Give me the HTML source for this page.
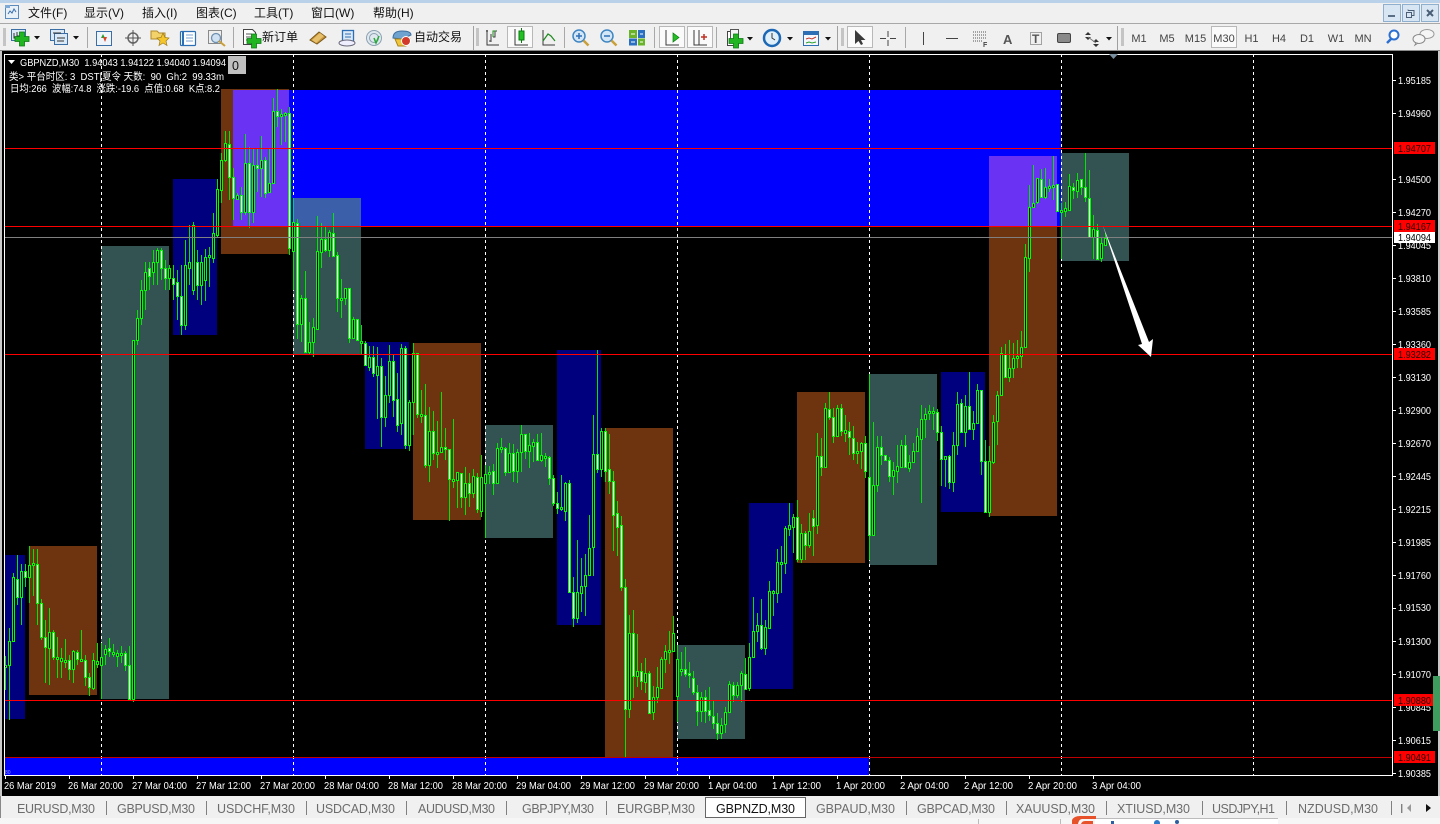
<!DOCTYPE html>
<html><head><meta charset="utf-8"><title>GBPNZD,M30</title>
<style>
html,body{margin:0;padding:0;background:#f0f0f0;width:1440px;height:824px;overflow:hidden}
svg{display:block}
text{font-family:"Liberation Sans","Noto Sans CJK SC",sans-serif;white-space:pre}
.m{font-size:12px;fill:#111}
.tb{font-size:12px;fill:#111}
.tf{font-size:11px;fill:#444}
.p{font-size:10.5px;fill:#fff}
.pd{font-size:10.5px;fill:#200}
.t{font-size:10.5px;fill:#fff}
.i{font-size:10px;fill:#fff}
.tab{font-size:12.5px;fill:#6c6c6c}
.c{shape-rendering:crispEdges}
</style></head><body>
<svg id="s" xmlns="http://www.w3.org/2000/svg" width="1440" height="824" viewBox="0 0 1440 824">
<defs>
<g id="plus"><path d="M-2.5-7h5v4.500h4.500v5h-4.500v4.500h-5v-4.500h-4.500v-5h4.500z" fill="#22b522" stroke="#0a7a12" stroke-width=".8"/></g>
<g id="arr"><path d="M0 0h6l-3 3.500z" fill="#111"/></g>
</defs>
<rect width="1440" height="824" fill="#f0f0f0"/>
<rect width="1440" height="3" fill="#b9d2ea"/>
<!-- menu -->
<g fill="none" stroke="#5b8bbd"><rect x="5.500" y="5.500" width="13" height="13" fill="#e8f0f8"/></g>
<path d="M8 14l2-3 2 2 2-4 2 3" fill="none" stroke="#3a6fae"/>
<path d="M5 5h5v3h-5z" fill="#7fa9d6"/>
<g class="m"><text x="28" y="17" class="m">文件(F)</text><text x="84" y="17" class="m">显示(V)</text><text x="142" y="17" class="m">插入(I)</text><text x="196" y="17" class="m">图表(C)</text><text x="254" y="17" class="m">工具(T)</text><text x="311" y="17" class="m">窗口(W)</text><text x="373" y="17" class="m">帮助(H)</text></g>
<g fill="#d8e6f4" stroke="#8fafce"><rect x="1383.500" y="4.500" width="17" height="17"/><rect x="1402.500" y="4.500" width="17" height="17"/><rect x="1421.500" y="4.500" width="17" height="17"/></g>
<rect x="1388" y="15" width="7" height="2" fill="#5a6f85"/>
<path d="M1408 10.500h6v5h-2M1408 10.500v-1M1406.500 12.500h5v5h-5z" fill="none" stroke="#4a5f75"/>
<path d="M1427 10l6 6M1433 10l-6 6" stroke="#4a5f75" stroke-width="2"/>
<!-- toolbar -->
<rect y="23" width="1440" height="1" fill="#a8a8a8"/>
<rect y="50" width="1440" height="1" fill="#8a8a8a"/>
<g fill="#b0b0b0" class="c"><rect x="3" y="28" width="3" height="18" opacity=".7"/><rect x="473" y="26" width="1" height="24" fill="#a0a0a0"/><rect x="476" y="28" width="3" height="18" opacity=".7"/><rect x="837" y="26" width="1" height="24" fill="#a0a0a0"/><rect x="841" y="28" width="3" height="18" opacity=".7"/><rect x="1117" y="26" width="1" height="24" fill="#a0a0a0"/><rect x="1121" y="28" width="3" height="18" opacity=".7"/></g>
<g fill="#a8a8a8" class="c"><rect x="87" y="27" width="1" height="21"/><rect x="233" y="27" width="1" height="21"/><rect x="564" y="27" width="1" height="21"/><rect x="654" y="27" width="1" height="21"/><rect x="716" y="27" width="1" height="21"/><rect x="905" y="27" width="1" height="21"/></g>
<!-- new chart -->
<rect x="11.500" y="29.500" width="14" height="11" fill="#dbe8f5" stroke="#3b6ea5"/><path d="M14 33v5h7M17 32v4h5" stroke="#333" fill="none"/>
<use href="#plus" x="22" y="39"/><use href="#arr" x="34" y="36"/>
<rect x="50.500" y="29.500" width="14" height="11" fill="#dbe8f5" stroke="#3b6ea5"/><rect x="54.500" y="33.500" width="13" height="11" fill="#dbe8f5" stroke="#3b6ea5"/><path d="M53 33h8M57 38h8M57 41h7" stroke="#333"/>
<use href="#arr" x="73" y="36"/>
<!-- market watch -->
<rect x="96.500" y="31.500" width="15" height="14" fill="#eef4fa" stroke="#3b6ea5"/><path d="M101 38l2-4 2 4z" fill="#2a9a2a"/><path d="M103 37l2 5 2-5z" fill="#d8452a"/>
<circle cx="133" cy="38" r="5" fill="none" stroke="#666" stroke-width="1.500"/><path d="M133 30v16M125 38h16" stroke="#555"/>
<path d="M151 31h6l2 2h6v6h-14z" fill="#f3d26a" stroke="#b08a2a"/><path d="M163 33l2 4.500 4 .5-3 3 1 4.500-4-2.500-4 2.500 1-4.500-3-3 4-.5z" fill="#f5c62c" stroke="#a07c18" stroke-width=".7"/>
<rect x="180.500" y="31.500" width="15" height="14" rx="1" fill="#fff" stroke="#2c6fb5" stroke-width="1.200"/><path d="M183 31v14" stroke="#2c6fb5" stroke-width="2"/><path d="M186 35h7M186 38h7M186 41h7" stroke="#7aa3cf"/>
<rect x="208.500" y="30.500" width="13" height="13" fill="#eee" stroke="#8a8a8a"/><circle cx="216" cy="38" r="4.500" fill="#cfe1f2" stroke="#6f8fb0" stroke-width="1.300"/><path d="M219 41l6 5" stroke="#c9a03a" stroke-width="2"/>
<!-- new order -->
<path d="M243.500 29.500h9l3 3v12h-12z" fill="#fff" stroke="#444"/><path d="M246 34h6M246 37h6M246 40h4" stroke="#555"/><use href="#plus" x="254" y="41"/>
<text x="262" y="41" class="tb">新订单</text>
<path d="M310 40l9-8 7 5-9 7z" fill="#c9973f" stroke="#7c5a1a"/><path d="M312 40l8-7 4 3-8 7z" fill="#e6c06a"/>
<rect x="342.500" y="30.500" width="11" height="11" fill="#dbe8f5" stroke="#2c6fb5" stroke-width="1.300"/><path d="M345 34h6M345 37h6" stroke="#2c6fb5"/><ellipse cx="347" cy="43" rx="8" ry="3" fill="#eef" stroke="#667"/>
<circle cx="374" cy="38" r="7.500" fill="#dfe8ee" stroke="#8aa0b0"/><circle cx="374" cy="38" r="4.500" fill="none" stroke="#8aa0b0"/><path d="M374 38l2 5 3-7" fill="none" stroke="#2aa83a" stroke-width="1.500"/>
<path d="M393 38q0-7 9-7t9 4l-9 4z" fill="#6fa3cf" stroke="#3d6f9f"/><path d="M395 39h15l-4 7h-8z" fill="#f2c63a" stroke="#a8851e"/><circle cx="406" cy="41" r="4.500" fill="#d23a2a" stroke="#fff"/>
<text x="414" y="41" class="tb">自动交易</text>
<!-- chart types -->
<path d="M487 30v15h12M486 31h2M491 34v8M491 41h-2M495 31v6h-2M495 31h2" fill="none" stroke="#3a3a3a"/><path d="M493 37v-6h3" stroke="#1e8a1e" fill="none"/>
<rect x="507.500" y="26.500" width="25" height="21" fill="#fafafa" stroke="#b8b8b8"/>
<path d="M515 29v16h13" stroke="#3a3a3a" fill="none"/><rect x="519" y="31" width="5" height="9" fill="#22c022" stroke="#0a7a12"/><path d="M521.500 28v3M521.500 40v3" stroke="#0a7a12"/>
<path d="M543 30v15h12" stroke="#3a3a3a" fill="none"/><path d="M543 41l5-7 3 2 4 5" fill="none" stroke="#1e8a1e" stroke-width="1.200"/>
<circle cx="579" cy="36" r="6" fill="#d3e6f6" stroke="#3f86c2" stroke-width="1.500"/><path d="M576 36h6M579 33v6" stroke="#2c6fb5" stroke-width="1.500"/><path d="M583.500 40.500l5 5" stroke="#c9a03a" stroke-width="2.500"/>
<circle cx="607" cy="36" r="6" fill="#d3e6f6" stroke="#3f86c2" stroke-width="1.500"/><path d="M604 36h6" stroke="#2c6fb5" stroke-width="1.500"/><path d="M611.500 40.500l5 5" stroke="#c9a03a" stroke-width="2.500"/>
<rect x="629" y="30" width="8" height="8" fill="#6ab42c"/><rect x="638" y="30" width="7" height="8" fill="#2a6fc2"/><rect x="629" y="38.500" width="8" height="7" fill="#2a6fc2"/><rect x="638" y="38.500" width="7" height="7" fill="#6ab42c"/><path d="M631 34h4M640 34h3M631 42h4M640 42h3" stroke="#fff"/>
<rect x="659.500" y="26.500" width="25" height="21" fill="#fafafa" stroke="#b8b8b8"/><path d="M666 30v15h13" stroke="#3a3a3a" fill="none"/><path d="M673 33v9l6-4.500z" fill="#22c022" stroke="#0a7a12" stroke-width=".7"/>
<rect x="687.500" y="26.500" width="25" height="21" fill="#fafafa" stroke="#b8b8b8"/><path d="M694 30v15h13M699 30v15" stroke="#3a3a3a" fill="none"/><path d="M701 37h6M704 34v6" stroke="#c03020" stroke-width="1.500"/>
<path d="M727.500 31.500h8l3 3v11h-11z" fill="#fff" stroke="#444"/><rect x="730.500" y="29.500" width="8" height="10" fill="#f4f4f4" stroke="#555"/><use href="#plus" x="736" y="41"/><use href="#arr" x="747" y="37"/>
<circle cx="772" cy="38" r="8" fill="#dff0fb" stroke="#1c68b5" stroke-width="2.500"/><path d="M772 33v5l3 2" stroke="#333" fill="none"/><use href="#arr" x="787" y="37"/>
<rect x="803.500" y="31.500" width="15" height="14" fill="#f4f8fc" stroke="#2c6fb5"/><rect x="804" y="32" width="14" height="3" fill="#2c6fb5"/><path d="M806 39l3-1 3 1 4-2" stroke="#c0392b" fill="none"/><path d="M806 43l3-1 3 1 4-1" stroke="#2aa02a" fill="none"/><use href="#arr" x="825" y="37"/>
<rect x="847.500" y="26.500" width="25" height="21" fill="#fafafa" stroke="#b8b8b8"/><path d="M855 30v14l3.500-3 2.500 4 2-1-2-4h4.500z" fill="#3a3a3a"/>
<path d="M888 31v6M888 40v6M880 38.500h6M890 38.500h6" stroke="#444"/>
<rect x="923" y="32" width="1" height="13" fill="#444"/><rect x="946" y="38" width="12" height="1" fill="#444"/>
<path d="M973 32h14M973 35h14M973 38h14M973 41h9" stroke="#555" stroke-dasharray="1 1"/><text x="983" y="47" font-size="7" font-weight="bold" fill="#444">F</text>
<text x="1003" y="44" font-size="13" font-weight="bold" fill="#555">A</text>
<rect x="1030.500" y="32.500" width="11" height="12" fill="none" stroke="#555" stroke-dasharray="1 1"/><text x="1032" y="43" font-size="12" font-weight="bold" fill="#555">T</text>
<rect x="1057.500" y="33.500" width="13" height="9" rx="1.500" fill="#8a8a8a" stroke="#444"/>
<path d="M1085 35l3-3 3 3zM1085 37l3 3 3-3zM1093 42l3-3 3 3zM1093 44l3 3 3-3z" fill="#333"/><path d="M1088 37l8 6" stroke="#777"/><use href="#arr" x="1106" y="37"/>
<g class="tf" text-anchor="middle"><text x="1139" y="42">M1</text><text x="1167" y="42">M5</text><text x="1195.500" y="42">M15</text></g>
<rect x="1211.500" y="26.500" width="25" height="21" fill="#fafafa" stroke="#b8b8b8"/>
<g class="tf" text-anchor="middle"><text x="1224" y="42">M30</text><text x="1251.500" y="42">H1</text><text x="1279" y="42">H4</text><text x="1307" y="42">D1</text><text x="1336" y="42">W1</text><text x="1363" y="42">MN</text></g>
<circle cx="1394" cy="35" r="4.500" fill="#fff" stroke="#2b6fd0" stroke-width="2"/><path d="M1391 39l-4 4" stroke="#2b6fd0" stroke-width="2.500"/>
<ellipse cx="1427" cy="34" rx="7" ry="4.500" fill="#f5f5f5" stroke="#999"/><ellipse cx="1419" cy="39" rx="6" ry="4.500" fill="#f5f5f5" stroke="#888"/><path d="M1416 43l-1 2 3-2" fill="#eee" stroke="#888"/>
<!-- chart frame -->
<rect y="51" width="1440" height="745" fill="#000"/>
<rect y="51" width="2" height="745" fill="#c8c8c8"/>
<rect x="1438" y="51" width="2" height="745" fill="#c8c8c8"/>
<g class="c">
<!-- zones -->
<rect x="289" y="90" width="772" height="136" fill="#0000ff"/>
<rect x="5" y="757" width="864" height="18" fill="#0000ff"/>
<g fill="#00007f"><rect x="5" y="555" width="20" height="164"/><rect x="173" y="179" width="44" height="156"/><rect x="365" y="342" width="44" height="107"/><rect x="557" y="350" width="44" height="275"/><rect x="749" y="503" width="44" height="186"/><rect x="941" y="372" width="44" height="140"/></g>
<g fill="#6e3410"><rect x="29" y="546" width="68" height="149"/><rect x="221" y="89" width="68" height="165"/><rect x="413" y="343" width="68" height="177"/><rect x="605" y="428" width="68" height="329"/><rect x="797" y="392" width="68" height="171"/><rect x="989" y="226" width="68" height="290"/></g>
<g fill="#335353"><rect x="101" y="246" width="68" height="453"/><rect x="293" y="226" width="68" height="129"/><rect x="485" y="425" width="68" height="113"/><rect x="677" y="645" width="68" height="94"/><rect x="869" y="374" width="68" height="191"/><rect x="1061" y="153" width="68" height="108"/></g>
<rect x="293" y="198" width="68" height="28" fill="#3b5fa8"/>
<g fill="#6a32f2"><rect x="233" y="90" width="56" height="136"/><rect x="989" y="156" width="68" height="70"/></g>
<!-- grid -->
<path d="M101.500 54V775M293.500 54V775M485.500 54V775M677.500 54V775M869.500 54V775M1061.500 54V775M1253.500 54V775" stroke="#fff" stroke-dasharray="3 3" fill="none"/>
</g>
<g id="cd" class="c"></g>
<g class="c">
<rect x="5" y="148" width="1388" height="1" fill="#ff0000"/>
<rect x="5" y="226" width="1388" height="1" fill="#ff0000"/>
<rect x="5" y="237" width="1388" height="1" fill="#808080"/>
<rect x="5" y="354" width="1388" height="1" fill="#ff0000"/>
<rect x="5" y="700" width="1388" height="1" fill="#ff0000"/>
<rect x="5" y="757" width="1388" height="1" fill="#c00000"/>
<!-- frame -->
<rect x="4" y="54" width="1389" height="1" fill="#fff"/>
<rect x="4" y="775" width="1389" height="1" fill="#fff"/>
<rect x="4" y="54" width="1" height="722" fill="#fff"/>
<rect x="1392" y="54" width="1" height="722" fill="#fff"/>
</g>
<path d="M1103 226L1149 342 1153 339 1151 357 1138 345 1142 344z" fill="#fff"/>
<path d="M1109 54h9l-4.500 5z" fill="#7a8fa0"/>
<!-- info text -->
<path d="M8 60h7l-3.500 4z" fill="#fff"/>
<text x="20" y="66" class="i" textLength="206" lengthAdjust="spacingAndGlyphs">GBPNZD,M30  1.94043 1.94122 1.94040 1.94094</text>
<rect x="228" y="56" width="18" height="18" fill="#c0c0c0"/>
<text x="232" y="70" font-size="12.500" fill="#111">0</text>
<text x="9" y="80" class="i" textLength="215" lengthAdjust="spacingAndGlyphs">类&gt; 平台时区: 3  DST|夏令 天数:  90  Gh:2  99.33m</text>
<text x="10" y="92" class="i" textLength="210" lengthAdjust="spacingAndGlyphs">日均:266  波幅:74.8  涨跌:-19.6  点值:0.68  K点:8.2</text>
<text x="5" y="774" font-size="5" fill="#9aa0ff">80</text>
<!-- price axis -->
<g fill="#fff" class="c"><rect x="1393" y="80" width="3" height="1"/><rect x="1393" y="113" width="3" height="1"/><rect x="1393" y="179" width="3" height="1"/><rect x="1393" y="212" width="3" height="1"/><rect x="1393" y="245" width="3" height="1"/><rect x="1393" y="278" width="3" height="1"/><rect x="1393" y="311" width="3" height="1"/><rect x="1393" y="344" width="3" height="1"/><rect x="1393" y="377" width="3" height="1"/><rect x="1393" y="410" width="3" height="1"/><rect x="1393" y="443" width="3" height="1"/><rect x="1393" y="476" width="3" height="1"/><rect x="1393" y="509" width="3" height="1"/><rect x="1393" y="542" width="3" height="1"/><rect x="1393" y="575" width="3" height="1"/><rect x="1393" y="608" width="3" height="1"/><rect x="1393" y="641" width="3" height="1"/><rect x="1393" y="674" width="3" height="1"/><rect x="1393" y="707" width="3" height="1"/><rect x="1393" y="740" width="3" height="1"/><rect x="1393" y="773" width="3" height="1"/></g>
<g class="p">
<text x="1398" y="84" class="p" textLength="33" lengthAdjust="spacingAndGlyphs">1.95185</text>
<text x="1398" y="117" class="p" textLength="33" lengthAdjust="spacingAndGlyphs">1.94960</text>
<text x="1398" y="183" class="p" textLength="33" lengthAdjust="spacingAndGlyphs">1.94500</text>
<text x="1398" y="216" class="p" textLength="33" lengthAdjust="spacingAndGlyphs">1.94270</text>
<text x="1398" y="249" class="p" textLength="33" lengthAdjust="spacingAndGlyphs">1.94045</text>
<text x="1398" y="282" class="p" textLength="33" lengthAdjust="spacingAndGlyphs">1.93810</text>
<text x="1398" y="315" class="p" textLength="33" lengthAdjust="spacingAndGlyphs">1.93585</text>
<text x="1398" y="348" class="p" textLength="33" lengthAdjust="spacingAndGlyphs">1.93360</text>
<text x="1398" y="381" class="p" textLength="33" lengthAdjust="spacingAndGlyphs">1.93130</text>
<text x="1398" y="414" class="p" textLength="33" lengthAdjust="spacingAndGlyphs">1.92900</text>
<text x="1398" y="447" class="p" textLength="33" lengthAdjust="spacingAndGlyphs">1.92670</text>
<text x="1398" y="480" class="p" textLength="33" lengthAdjust="spacingAndGlyphs">1.92445</text>
<text x="1398" y="513" class="p" textLength="33" lengthAdjust="spacingAndGlyphs">1.92215</text>
<text x="1398" y="546" class="p" textLength="33" lengthAdjust="spacingAndGlyphs">1.91985</text>
<text x="1398" y="579" class="p" textLength="33" lengthAdjust="spacingAndGlyphs">1.91760</text>
<text x="1398" y="611" class="p" textLength="33" lengthAdjust="spacingAndGlyphs">1.91530</text>
<text x="1398" y="645" class="p" textLength="33" lengthAdjust="spacingAndGlyphs">1.91300</text>
<text x="1398" y="678" class="p" textLength="33" lengthAdjust="spacingAndGlyphs">1.91070</text>
<text x="1398" y="711" class="p" textLength="33" lengthAdjust="spacingAndGlyphs">1.90845</text>
<text x="1398" y="744" class="p" textLength="33" lengthAdjust="spacingAndGlyphs">1.90615</text>
<text x="1398" y="777" class="p" textLength="33" lengthAdjust="spacingAndGlyphs">1.90385</text>
</g>
<g fill="#ff0000" class="c"><rect x="1394" y="142" width="41" height="12"/><rect x="1394" y="220" width="41" height="12"/><rect x="1394" y="348" width="41" height="12"/><rect x="1394" y="694" width="41" height="12"/><rect x="1394" y="751" width="41" height="12"/></g>
<rect x="1394" y="232" width="41" height="11" fill="#fff" class="c"/>
<text x="1398" y="152" class="pd" textLength="33" lengthAdjust="spacingAndGlyphs">1.94707</text>
<text x="1398" y="230" class="pd" textLength="33" lengthAdjust="spacingAndGlyphs">1.94167</text>
<text x="1398" y="241" class="pd" style="fill:#000" textLength="33" lengthAdjust="spacingAndGlyphs">1.94094</text>
<text x="1398" y="358" class="pd" textLength="33" lengthAdjust="spacingAndGlyphs">1.93282</text>
<text x="1398" y="704" class="pd" textLength="33" lengthAdjust="spacingAndGlyphs">1.90880</text>
<text x="1398" y="761" class="pd" textLength="33" lengthAdjust="spacingAndGlyphs">1.90491</text>
<rect x="1433" y="676" width="7" height="55" fill="#3f9c5f"/>
<!-- time axis -->
<path d="M5.500 776v3M69.500 776v3M133.500 776v3M197.500 776v3M261.500 776v3M325.500 776v3M389.500 776v3M453.500 776v3M517.500 776v3M581.500 776v3M645.500 776v3M709.500 776v3M773.500 776v3M837.500 776v3M901.500 776v3M965.500 776v3M1029.500 776v3M1093.500 776v3" stroke="#fff"/>
<g class="t">
<text x="4" y="789" class="t" textLength="52" lengthAdjust="spacingAndGlyphs">26 Mar 2019</text>
<text x="68" y="789" class="t" textLength="55" lengthAdjust="spacingAndGlyphs">26 Mar 20:00</text>
<text x="132" y="789" class="t" textLength="55" lengthAdjust="spacingAndGlyphs">27 Mar 04:00</text>
<text x="196" y="789" class="t" textLength="55" lengthAdjust="spacingAndGlyphs">27 Mar 12:00</text>
<text x="260" y="789" class="t" textLength="55" lengthAdjust="spacingAndGlyphs">27 Mar 20:00</text>
<text x="324" y="789" class="t" textLength="55" lengthAdjust="spacingAndGlyphs">28 Mar 04:00</text>
<text x="388" y="789" class="t" textLength="55" lengthAdjust="spacingAndGlyphs">28 Mar 12:00</text>
<text x="452" y="789" class="t" textLength="55" lengthAdjust="spacingAndGlyphs">28 Mar 20:00</text>
<text x="516" y="789" class="t" textLength="55" lengthAdjust="spacingAndGlyphs">29 Mar 04:00</text>
<text x="580" y="789" class="t" textLength="55" lengthAdjust="spacingAndGlyphs">29 Mar 12:00</text>
<text x="644" y="789" class="t" textLength="55" lengthAdjust="spacingAndGlyphs">29 Mar 20:00</text>
<text x="708" y="789" class="t" textLength="49" lengthAdjust="spacingAndGlyphs">1 Apr 04:00</text>
<text x="772" y="789" class="t" textLength="49" lengthAdjust="spacingAndGlyphs">1 Apr 12:00</text>
<text x="836" y="789" class="t" textLength="49" lengthAdjust="spacingAndGlyphs">1 Apr 20:00</text>
<text x="900" y="789" class="t" textLength="49" lengthAdjust="spacingAndGlyphs">2 Apr 04:00</text>
<text x="964" y="789" class="t" textLength="49" lengthAdjust="spacingAndGlyphs">2 Apr 12:00</text>
<text x="1028" y="789" class="t" textLength="49" lengthAdjust="spacingAndGlyphs">2 Apr 20:00</text>
<text x="1092" y="789" class="t" textLength="49" lengthAdjust="spacingAndGlyphs">3 Apr 04:00</text>
</g>
<!-- tabs -->
<rect y="796" width="1440" height="22" fill="#f0f0f0"/>
<rect y="796" width="1" height="22" fill="#888"/>
<rect y="818" width="1440" height="6" fill="#f6f6f6"/>
<g fill="#808080" class="c"><rect x="106" y="801" width="1" height="14"/><rect x="206" y="801" width="1" height="14"/><rect x="306" y="801" width="1" height="14"/><rect x="406" y="801" width="1" height="14"/><rect x="506" y="801" width="1" height="14"/><rect x="606" y="801" width="1" height="14"/><rect x="906" y="801" width="1" height="14"/><rect x="1006" y="801" width="1" height="14"/><rect x="1106" y="801" width="1" height="14"/><rect x="1202" y="801" width="1" height="14"/><rect x="1286" y="801" width="1" height="14"/><rect x="1391" y="801" width="1" height="14"/></g>
<rect x="705.500" y="797.500" width="100" height="20" fill="#fff" stroke="#666"/>
<text x="17" y="813" class="tab" textLength="78">EURUSD,M30</text>
<text x="117" y="813" class="tab" textLength="78">GBPUSD,M30</text>
<text x="217" y="813" class="tab" textLength="78">USDCHF,M30</text>
<text x="316" y="813" class="tab" textLength="79">USDCAD,M30</text>
<text x="418" y="813" class="tab" textLength="77">AUDUSD,M30</text>
<text x="522" y="813" class="tab" textLength="72">GBPJPY,M30</text>
<text x="617" y="813" class="tab" textLength="78">EURGBP,M30</text>
<text x="716" y="813" class="tab" style="fill:#111" textLength="79">GBPNZD,M30</text>
<text x="816" y="813" class="tab" textLength="79">GBPAUD,M30</text>
<text x="917" y="813" class="tab" textLength="78">GBPCAD,M30</text>
<text x="1016" y="813" class="tab" textLength="79">XAUUSD,M30</text>
<text x="1117" y="813" class="tab" textLength="73">XTIUSD,M30</text>
<text x="1212" y="813" class="tab" textLength="63">USDJPY,H1</text>
<text x="1298" y="813" class="tab" textLength="80">NZDUSD,M30</text>
<text x="1400" y="813" class="tab">I</text>
<path d="M1411 804v8l-4-4z" fill="#999"/><path d="M1426 804v8l5-4z" fill="#111"/>
<!-- bottom strip -->
<rect x="1095" y="819" width="183" height="5" fill="#fff"/>
<rect x="1095" y="818" width="183" height="1" fill="#bbb"/>
<rect x="978" y="819" width="1" height="5" fill="#bbb"/><rect x="1060" y="819" width="1" height="5" fill="#bbb"/>
<path d="M1072 824v-4q2-4 8-4h16v3h-14q-3 0-4 5z" fill="#e8522a"/><path d="M1081 824q1-3 4-3h8v3z" fill="#e8522a"/>
<circle cx="1157" cy="823" r="3" fill="#2c7ac9"/><circle cx="1177" cy="822" r="2" fill="#2c5f9f"/><rect x="1111" y="821" width="3" height="3" fill="#2c5f9f"/>
</svg>
<script>
var d=[5,665,667,656,690,0,9,641,665,628,720,0,13,577,641,573,641,0,17,579,597,555,605,1,21,571,597,564,625,0,25,571,577,564,587,1,29,565,577,546,603,0,33,563,565,549,596,0,37,564,603,549,625,1,41,603,637,599,640,1,45,637,647,620,683,1,49,632,648,608,685,0,53,632,657,630,660,1,57,657,658,637,678,0,61,658,661,648,678,0,65,660,661,639,668,0,69,660,669,655,680,1,73,651,669,650,683,0,77,652,659,650,665,1,81,659,660,630,660,0,85,660,677,655,686,1,89,677,687,673,696,1,93,660,688,653,690,0,97,661,664,643,668,0,101,657,665,643,699,0,105,649,654,645,665,0,109,648,651,638,657,1,113,652,654,644,657,0,117,653,656,650,667,0,121,653,655,646,663,0,125,653,665,651,671,1,129,665,699,646,699,1,133,340,699,340,702,0,
137,318,340,310,345,0,141,290,318,280,325,0,145,272,290,262,310,0,149,268,276,262,290,1,153,262,272,250,285,0,157,250,262,248,285,0,161,250,268,248,280,1,165,268,278,260,290,1,169,268,278,265,290,0,173,278,284,265,300,1,177,282,296,270,320,1,181,296,325,265,335,1,185,265,325,240,330,0,189,262,268,225,285,0,193,225,290,222,295,0,197,262,285,250,300,1,201,262,285,255,305,0,
205,257,280,249,301,0,209,255,257,247,287,0,213,233,258,213,263,0,217,189,235,179,238,0,221,160,190,153,203,0,225,143,160,131,162,0,229,144,177,131,200,1,233,177,198,168,220,1,237,195,199,193,200,0,241,195,212,187,220,1,245,163,212,134,215,0,249,163,212,147,228,1,253,165,212,149,223,0,257,165,168,149,192,1,261,160,168,136,197,0,265,160,193,157,198,1,269,183,192,149,192,0,273,111,183,98,183,0,277,111,116,89,127,1,281,114,116,109,145,0,285,113,115,112,142,0,289,113,248,107,255,1,293,222,251,198,290,0,297,223,324,219,339,1,301,298,324,295,342,0,305,298,352,271,352,1,309,342,352,322,354,0,313,327,342,318,357,0,317,251,329,216,330,0,321,239,252,223,268,0,325,239,250,227,252,1,329,232,250,230,257,0,333,233,256,213,256,1,337,255,298,252,312,1,341,298,299,279,318,0,345,288,298,288,305,0,349,288,338,288,343,1,353,319,338,317,338,0,357,319,340,319,340,1,361,341,343,325,355,0,
365,343,365,341,365,1,369,357,367,346,371,0,373,357,373,346,377,1,377,366,375,347,419,0,381,366,417,358,447,1,385,395,417,376,427,0,389,361,395,345,403,0,393,361,400,355,417,1,397,399,425,373,432,1,401,348,423,344,435,0,405,348,445,346,449,1,409,402,445,400,451,0,413,353,402,343,435,0,417,353,414,353,418,1,421,414,415,390,423,0,425,415,465,384,468,1,429,431,465,407,482,0,433,431,453,411,460,1,437,452,453,421,468,0,441,447,452,392,452,0,445,447,449,428,460,1,449,449,479,449,521,1,453,479,480,419,488,0,457,472,480,472,508,0,461,473,497,473,508,1,465,483,497,467,515,0,469,483,493,473,507,1,473,476,493,469,498,0,477,477,509,473,513,1,481,477,511,455,517,0,485,474,483,465,538,0,489,472,474,466,484,0,493,471,483,464,495,1,497,448,483,443,483,0,501,447,448,438,453,0,505,448,472,447,476,1,509,453,472,443,473,0,513,453,471,444,482,1,517,452,471,449,483,0,521,434,452,425,472,0,525,434,451,434,459,1,529,445,451,433,468,0,533,442,446,439,462,0,537,442,460,434,461,1,541,455,460,433,462,0,545,456,458,453,467,0,549,457,478,456,485,1,553,478,503,475,506,1,557,503,508,492,514,1,561,507,509,475,511,0,565,483,511,482,521,0,569,483,592,480,592,1,573,592,618,577,627,1,577,592,618,540,623,0,581,586,593,558,612,0,585,575,586,554,616,0,589,548,575,515,575,0,593,454,547,415,576,0,597,454,469,350,473,1,601,431,469,428,477,0,605,431,471,428,482,1,609,469,481,434,494,1,613,481,515,471,551,1,617,513,527,501,556,1,
621,525,587,516,591,1,625,587,709,579,757,1,629,633,709,615,718,0,633,633,676,610,698,1,637,671,676,634,687,0,641,671,681,663,690,1,645,673,682,658,693,0,649,673,713,671,713,1,653,697,712,686,720,0,657,687,697,667,703,0,661,659,688,657,688,0,665,651,659,645,673,0,669,650,651,631,664,0,673,633,651,616,651,0,677,659,696,645,722,0,681,669,671,652,676,0,685,669,674,647,677,1,689,673,675,662,688,1,693,678,692,671,695,1,697,692,711,685,726,1,701,697,711,692,722,0,705,697,711,690,723,1,709,710,715,687,721,1,713,716,723,701,729,1,717,723,733,713,740,1,721,725,733,718,739,0,725,712,724,707,733,0,729,684,712,681,712,0,733,685,695,682,702,1,737,685,695,682,698,0,741,673,685,671,702,0,745,674,689,658,689,1,749,657,688,643,691,0,753,631,657,597,657,0,757,625,631,613,642,0,761,625,648,599,650,1,765,627,648,620,655,0,769,591,628,581,628,0,773,591,592,590,616,0,777,562,593,549,603,0,781,562,563,546,593,0,785,528,563,526,574,0,789,525,529,503,536,0,793,517,527,514,553,0,797,517,559,500,562,1,801,533,559,524,563,0,805,533,545,531,560,1,809,531,545,513,548,0,813,518,526,510,556,1,817,456,525,433,534,0,
821,456,467,438,476,1,825,408,467,403,467,0,829,409,417,392,420,1,833,417,436,408,443,1,837,408,436,405,437,0,841,408,431,404,436,1,845,430,433,415,442,0,849,431,437,422,455,1,853,438,453,426,460,1,857,451,453,442,464,0,861,443,451,442,469,0,865,443,471,436,478,1,869,477,535,374,560,1,873,485,535,422,535,0,877,447,485,436,492,0,881,447,455,436,465,1,885,455,460,455,460,1,889,460,476,457,482,1,893,470,476,462,495,0,897,466,471,445,483,0,901,445,467,440,468,0,905,445,467,435,468,1,909,462,468,455,472,0,913,451,462,443,463,0,917,436,451,428,452,0,921,419,439,405,503,0,925,414,419,408,438,0,929,411,413,405,420,0,933,411,413,407,430,0,937,412,432,409,441,1,941,432,459,426,486,1,945,456,459,456,487,0,949,456,482,455,489,1,953,445,482,432,492,0,957,404,445,392,455,0,961,403,432,399,433,1,965,406,432,395,447,0,969,406,429,372,430,1,973,423,429,411,440,0,977,390,423,384,423,0,981,390,461,390,475,1,985,461,512,440,513,1,989,461,512,446,517,0,993,422,462,415,464,0,997,395,421,391,445,0,1001,353,395,347,395,0,1005,354,377,344,378,1,1009,368,377,340,382,0,1013,358,368,343,378,0,1017,356,358,340,368,0,
1021,347,356,331,368,0,1025,257,347,244,347,0,1029,207,258,185,272,0,1033,203,207,165,208,0,1037,178,202,178,204,0,1041,179,197,169,197,1,1045,187,197,168,199,0,1049,186,187,179,192,0,1053,185,187,156,200,0,1057,184,211,184,211,1,1061,210,211,203,259,0,1065,208,211,202,217,0,1069,186,210,174,211,0,1073,187,190,183,199,1,1077,180,191,173,198,0,1081,179,187,179,195,1,1085,187,197,153,202,1,1089,198,237,170,237,1,1093,229,237,215,259,0,1097,230,259,224,260,1,1101,243,258,237,262,0,1105,238,245,233,246,0];
var wk='',gb='',wh='',bk='';
for(var i=0;i<d.length;i+=6){var x=d[i],t=d[i+1],b=d[i+2],h=d[i+3],l=d[i+4],w=d[i+5];
if(b-t<2)b=t+2;
wk+='M'+(x+.5)+' '+h+'V'+l;
gb+='M'+(x-1)+' '+t+'h3V'+(b+1)+'h-3z';
var f='M'+x+' '+(t+1)+'h1V'+b+'h-1z';
if(w)wh+=f;else bk+=f;}
var g=document.getElementById('cd'),n='http://www.w3.org/2000/svg';
function add(dd,at){var p=document.createElementNS(n,'path');p.setAttribute('d',dd);for(var k in at)p.setAttribute(k,at[k]);g.appendChild(p);}
add(wk,{stroke:'#00e600',fill:'none'});
add(gb,{fill:'#00ff00'});
add(wh,{fill:'#ffffff'});
add(bk,{fill:'#000000'});
</script>
</body></html>
